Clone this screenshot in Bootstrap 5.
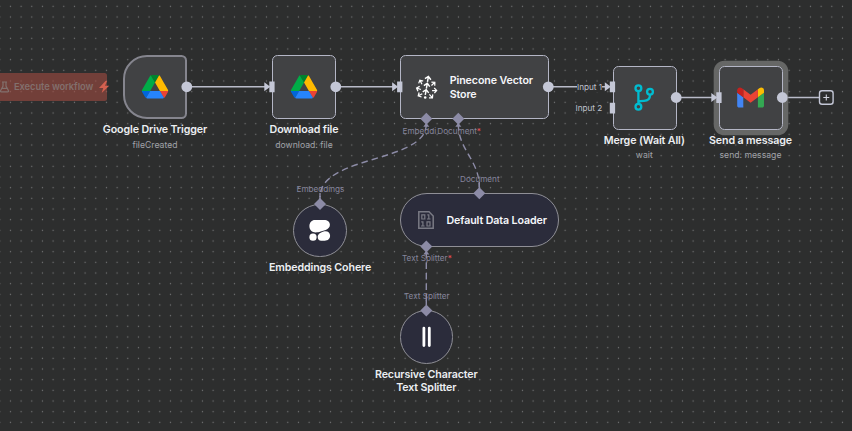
<!DOCTYPE html>
<html lang="en" data-bs-theme="dark">
<head>
<meta charset="utf-8">
<meta name="viewport" content="width=device-width, initial-scale=1">
<title>Workflow canvas</title>
<link href="https://cdn.jsdelivr.net/npm/bootstrap@5.3.0/dist/css/bootstrap.min.css" rel="stylesheet">
<style>
body{font-family:Inter,"Liberation Sans",sans-serif;background:#2d2e2e;width:852px;height:431px}
.canvas{width:852px;height:431px}
.wires{left:0;top:0}
.wf-node{position:absolute;width:64.5px;height:64.5px;background:#414244;border:1.5px solid #b4b6c6;border-radius:5.5px}
.wf-trigger{border-radius:24px 5.5px 5.5px 24px;border-color:#85858e;border-width:2px}
.wf-wide{width:149px}
.wf-selected{box-shadow:0 0 0 5.3px #666766}
.wf-sub{background:#2b2c3b;border:1.3px solid #8f8f96;border-radius:27px;width:53.5px;height:53.5px}
.wf-pill{width:159px}
.inner-name{font-size:10.67px;font-weight:600;line-height:13.3px;color:#f5f6fa;letter-spacing:-.1px;padding-top:1.5px}
.caption{position:absolute;transform:translateX(-50%);white-space:nowrap;text-align:center;font-size:10.67px;font-weight:600;line-height:13.3px;color:#eceef2;letter-spacing:-.12px}
.hint{font-size:8.67px;font-weight:400;line-height:13px;color:#a0a2a8;margin-top:2.6px;letter-spacing:0}
.port{position:absolute;white-space:nowrap;font-size:8.2px;line-height:10px;color:#86859c;letter-spacing:-.03px}
.port-main{color:#bfc1cd}
.port-main.masked{background:#2d2e2e}
.req{color:#f0525a}
.run{position:absolute;left:-10px;top:73px;width:117px;height:28px;background:rgba(160,75,65,.6);border-radius:2.5px;color:#82706d;font-size:9.3px;font-weight:600;padding-left:9px;letter-spacing:-.06px}
</style>
<script src="https://cdn.jsdelivr.net/npm/bootstrap@5.3.0/dist/js/bootstrap.bundle.min.js"></script>
</head>
<body class="m-0 overflow-hidden">
<main class="canvas position-relative overflow-hidden">
<svg class="wires position-absolute" width="852" height="431" fill="none">
<defs><pattern id="dots" width="10.667" height="10.667" patternUnits="userSpaceOnUse" x="5.1" y="1"><circle cx="5.333" cy="5.333" r=".68" fill="#777879"/></pattern></defs>
<rect width="852" height="431" fill="url(#dots)"/>
<g stroke="#b9bbc9" stroke-width="1.4"><path d="M187 86.8H267M336 86.8H395M548 86.8H608M676 97.5H714M782 97.5H819"/></g>
<g stroke="#8c8ba6" stroke-width="1.400" stroke-dasharray="6.500 4"><path d="M426.300 124C426.300 163 320 155 320 197M458.300 124C458.300 150 479.300 160 479.300 187M426.300 252V304"/></g>
</svg>

<div class="run d-flex align-items-center"><svg width="11" height="12" viewBox="0 0 10 12" fill="none" stroke="currentColor" stroke-width="1.2"><path d="M2.500 1h5M3.500 1v4L1 9.800q-.3 1 .8 1h6.400q1.100 0 .8-1L6.500 5V1M2.500 7.300h5"/></svg><span class="ms-1">Execute workflow</span></div>

<div class="wf-node wf-trigger" style="left:122.800px;top:54.500px"></div>
<div class="wf-node" style="left:271.800px;top:54.500px"></div>
<div class="wf-node wf-wide d-flex align-items-center" style="left:399.700px;top:54.500px"><div class="inner-name" style="padding-left:49px">Pinecone Vector<br>Store</div></div>
<div class="wf-node" style="left:612.500px;top:65.500px"></div>
<div class="wf-node wf-selected" style="left:718.500px;top:65.500px"></div>
<div class="wf-node wf-sub" style="left:293.200px;top:203.800px"></div>
<div class="wf-node wf-sub wf-pill d-flex align-items-center" style="left:400px;top:193px"><div class="inner-name text-nowrap" style="padding-left:45.500px">Default Data Loader</div></div>
<div class="wf-node wf-sub" style="left:399.700px;top:310.300px"></div>

<svg class="wires position-absolute" width="852" height="431" fill="none">
<defs>
<g id="drive"><path fill="#0066da" d="m6.600 66.850 3.850 6.650c.8 1.400 1.950 2.500 3.300 3.300L27.500 53H0c0 1.550.4 3.100 1.200 4.500z"/><path fill="#00ac47" d="M43.650 25 29.900 1.200c-1.350.8-2.500 1.900-3.300 3.300L1.200 48.500A9.060 9.060 0 0 0 0 53h27.500z"/><path fill="#ea4335" d="M73.550 76.800c1.350-.8 2.500-1.900 3.300-3.300l1.600-2.750L86.100 57.500c.8-1.400 1.200-2.950 1.200-4.500H59.800l5.850 11.500z"/><path fill="#00832d" d="M43.650 25 57.400 1.200C56.050.4 54.500 0 52.900 0H34.400c-1.600 0-3.150.45-4.500 1.200z"/><path fill="#2684fc" d="M59.800 53H27.500L13.750 76.800c1.350.8 2.900 1.200 4.500 1.200h50.800c1.600 0 3.150-.45 4.500-1.200z"/><path fill="#ffba00" d="m73.400 26.500-12.700-22c-.8-1.400-1.950-2.500-3.300-3.300L43.650 25 59.800 53h27.450c0-1.550-.4-3.100-1.200-4.500z"/></g>
<path id="dia" d="M0-6 6 0 0 6-6 0z" fill="#8c8ba6"/>
<path id="foot" d="M0 4 3 8H-3z" fill="#8c8ba6"/>
<path id="arrow" d="M0-4.500 6 0 0 4.500z" fill="#c4c7d6"/>
<path id="up" d="M0 2.500V-2.500M-3-.1 0-2.900 3-.1"/>
</defs>
<path d="M105.500 81 99 88h4.200l-1.500 5 7.500-7.200h-4.200l2-4.800z" fill="#d4604f"/>
<use href="#drive" transform="translate(141.900 75) scale(.301)"/>
<use href="#drive" transform="translate(290.900 75) scale(.301)"/>
<g fill="#c4c7d6"><circle cx="186.800" cy="86.800" r="5.400"/><circle cx="335.800" cy="86.800" r="5.400"/><circle cx="548.300" cy="86.800" r="5.400"/><circle cx="676.200" cy="97.500" r="5.400"/><circle cx="782.300" cy="97.500" r="5.400"/>
<path d="M269.300 81.500h5.300v10.700h-5.300zM397.100 81.500h5.300v10.700h-5.300zM609.800 81.500h5.300v10.700h-5.300zM609.800 102.800h5.300v10.700h-5.300zM716.300 92.200h5.300v10.700h-5.300z"/></g>
<use href="#arrow" x="264.300" y="86.800"/><use href="#arrow" x="392.100" y="86.800"/><use href="#arrow" x="604.800" y="86.800"/><use href="#arrow" x="711.300" y="97.500"/>
<rect x="819.500" y="90.700" width="13.600" height="13.600" rx="2.500" fill="#2d2e2e" stroke="#c4c7d6" stroke-width="1.400"/><path d="M826.300 94.500v6M823.300 97.500h6" stroke="#d0d2dc" stroke-width="1.100"/>
<g stroke="#fff" stroke-width="1.450">
<use href="#up" transform="translate(427.900 79.300) rotate(10)"/><use href="#up" transform="translate(426.800 86.200) rotate(10)"/><use href="#up" transform="translate(425.700 92.500) rotate(10)"/>
<use href="#up" transform="translate(421 82.300) rotate(-28) scale(.85)"/><use href="#up" transform="translate(433 84) rotate(48) scale(.85)"/>
<use href="#up" transform="translate(418.900 88.800) rotate(-70) scale(.85)"/><use href="#up" transform="translate(434.200 90.500) rotate(88) scale(.85)"/>
<use href="#up" transform="translate(420.400 94.700) rotate(-118) scale(.85)"/><use href="#up" transform="translate(430.800 96) rotate(138) scale(.85)"/></g>
<circle cx="425.200" cy="97.500" r="1.300" fill="#fff"/>
<g stroke="#00bcd0" stroke-width="2.300"><circle cx="638.400" cy="88.200" r="2.900"/><circle cx="650" cy="91.700" r="2.900"/><circle cx="638.400" cy="106.700" r="2.900"/><path d="M638.400 91V104M638.400 102Q640 100.800 644 100.800Q650 100.800 650 95"/></g>
<g transform="translate(737.200 87.500) scale(.3045)"><path fill="#4285f4" d="M6 66h14V32L0 17v43c0 3.300 2.700 6 6 6z"/><path fill="#34a853" d="M68 66h14c3.300 0 6-2.700 6-6V17L68 32z"/><path fill="#fbbc04" d="M68 6v26l20-15V9c0-7.400-8.500-11.600-14.400-7.200z"/><path fill="#ea4335" d="M20 32V6l24 18L68 6v26L44 50z"/><path fill="#c5221f" d="M0 9v8l20 15V6l-5.600-4.200C8.500-2.600 0 1.600 0 9z"/></g>
<g fill="#fff"><path d="M314.800 220H324c3.600 0 5.900 2 5.900 4.800 0 2.400-1.500 4-4.200 5.100l-5 1.700c-1.900.6-3.200.8-5 .8-3.700 0-6.300-2.700-6.300-6.200 0-3.800 2.500-6.200 5.400-6.200z"/><rect x="309.400" y="233.400" width="7.200" height="7.300" rx="3.500"/><path d="M323.700 231.400c4-.9 6.400 1.300 6.400 4.400 0 3-2.100 4.900-5.400 4.900h-3.500c-2.200 0-3.500-1.600-3.500-3.700 0-2.400 1.400-4 6-5.600z"/></g>
<g stroke="#797a84" stroke-width="1.500"><path d="M418.800 211.700H429L433.200 216V228.200H418.800z"/><path stroke-width="1.200" d="M421.800 214.800h3v4.200h-3zM427.300 214.800h1.500V219M427 219h3.500M421.200 221.800h1.700V226M421 226h3.600M427 221.800h3v4.200h-3z"/></g>
<g stroke="#fff" stroke-width="2.800" stroke-linecap="round"><path d="M423.900 328.200V345.600M429.300 328.200V345.600"/></g>
<use href="#dia" x="426.300" y="118.800"/><use href="#foot" x="426.300" y="118.800"/><use href="#dia" x="458.300" y="118.800"/><use href="#foot" x="458.300" y="118.800"/>
<use href="#dia" x="320" y="204"/><use href="#dia" x="479.300" y="193.300"/><use href="#dia" x="426.300" y="246.600"/><use href="#foot" x="426.300" y="246.600"/><use href="#dia" x="426.300" y="310.500"/>
<path d="M320 199V193M479.300 188V182M426.300 305V300" stroke="#8c8ba6" stroke-width="1.400"/>
</svg>

<div class="caption" style="left:155px;top:122.800px">Google Drive Trigger<div class="hint">fileCreated</div></div>
<div class="caption" style="left:304px;top:122.800px">Download file<div class="hint">download: file</div></div>
<div class="caption" style="left:644.300px;top:133.500px">Merge (Wait All)<div class="hint">wait</div></div>
<div class="caption" style="left:750.500px;top:133.500px">Send a message<div class="hint">send: message</div></div>
<div class="caption" style="left:320px;top:260.800px">Embeddings Cohere</div>
<div class="caption" style="left:426.300px;top:367.700px">Recursive Character<br>Text Splitter</div>

<div class="port port-main masked" style="left:577px;top:82px">Input 1</div>
<div class="port port-main" style="left:575.500px;top:103px">Input 2</div>
<div class="port" style="left:402.500px;top:126px">Embeddi</div>
<div class="port" style="left:437.300px;top:126px">Document<span class="req">*</span></div>
<div class="port" style="left:296.500px;top:184px">Embeddings</div>
<div class="port" style="left:460px;top:174px">Document</div>
<div class="port" style="left:402px;top:253px">Text Splitter<span class="req">*</span></div>
<div class="port" style="left:404px;top:291px">Text Splitter</div>
</main>
</body>
</html>
